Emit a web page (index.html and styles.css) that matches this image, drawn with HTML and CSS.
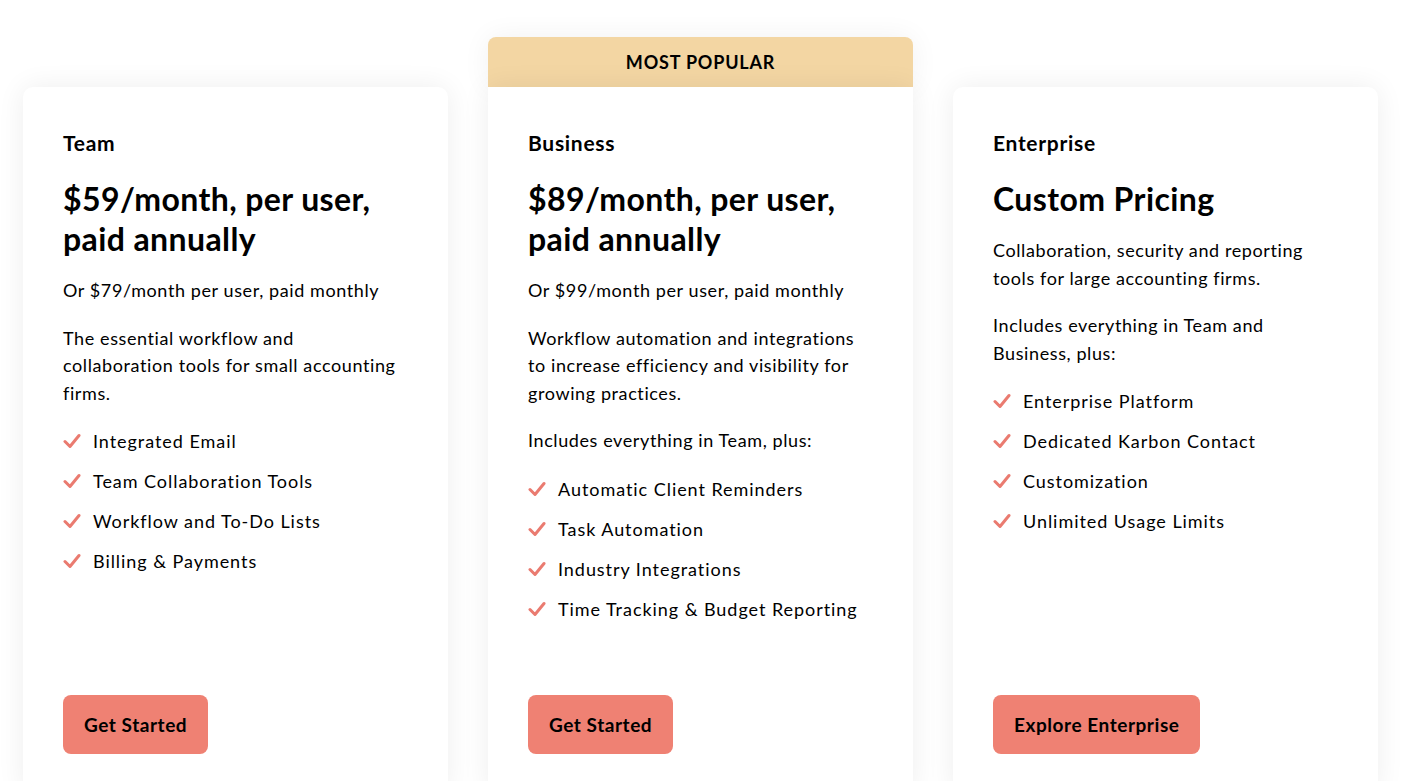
FILE: index.html
```html
<!DOCTYPE html>
<html lang="en">
<head>
<meta charset="utf-8">
<title>Pricing</title>
<link rel="stylesheet" href="styles.css">
</head>
<body>
<main class="plans">
  <section class="plan">
    <div class="card">
      <h3 class="plan-name">Team</h3>
      <h2 class="price">$59/month, per user, paid annually</h2>
      <p class="alt">Or $79/month per user, paid monthly</p>
      <p class="desc">The essential workflow and collaboration tools for small accounting firms.</p>
      <ul class="features">
        <li><svg class="check" viewBox="0 0 18 16"><polyline points="2,8.5 7,13.5 16,2.5"/></svg>Integrated Email</li>
        <li><svg class="check" viewBox="0 0 18 16"><polyline points="2,8.5 7,13.5 16,2.5"/></svg>Team Collaboration Tools</li>
        <li><svg class="check" viewBox="0 0 18 16"><polyline points="2,8.5 7,13.5 16,2.5"/></svg>Workflow and To-Do Lists</li>
        <li><svg class="check" viewBox="0 0 18 16"><polyline points="2,8.5 7,13.5 16,2.5"/></svg>Billing &amp; Payments</li>
      </ul>
      <a class="btn" href="#">Get Started</a>
    </div>
  </section>
  <section class="plan popular">
    <div class="banner">MOST POPULAR</div>
    <div class="card">
      <h3 class="plan-name">Business</h3>
      <h2 class="price">$89/month, per user, paid annually</h2>
      <p class="alt">Or $99/month per user, paid monthly</p>
      <p class="desc">Workflow automation and integrations to increase efficiency and visibility for growing practices.</p>
      <p class="desc">Includes everything in Team, plus:</p>
      <ul class="features">
        <li><svg class="check" viewBox="0 0 18 16"><polyline points="2,8.5 7,13.5 16,2.5"/></svg>Automatic Client Reminders</li>
        <li><svg class="check" viewBox="0 0 18 16"><polyline points="2,8.5 7,13.5 16,2.5"/></svg>Task Automation</li>
        <li><svg class="check" viewBox="0 0 18 16"><polyline points="2,8.5 7,13.5 16,2.5"/></svg>Industry Integrations</li>
        <li><svg class="check" viewBox="0 0 18 16"><polyline points="2,8.5 7,13.5 16,2.5"/></svg>Time Tracking &amp; Budget Reporting</li>
      </ul>
      <a class="btn" href="#">Get Started</a>
    </div>
  </section>
  <section class="plan">
    <div class="card">
      <h3 class="plan-name">Enterprise</h3>
      <h2 class="price">Custom Pricing</h2>
      <p class="desc">Collaboration, security and reporting tools for large accounting firms.</p>
      <p class="desc">Includes everything in Team and Business, plus:</p>
      <ul class="features">
        <li><svg class="check" viewBox="0 0 18 16"><polyline points="2,8.5 7,13.5 16,2.5"/></svg>Enterprise Platform</li>
        <li><svg class="check" viewBox="0 0 18 16"><polyline points="2,8.5 7,13.5 16,2.5"/></svg>Dedicated Karbon Contact</li>
        <li><svg class="check" viewBox="0 0 18 16"><polyline points="2,8.5 7,13.5 16,2.5"/></svg>Customization</li>
        <li><svg class="check" viewBox="0 0 18 16"><polyline points="2,8.5 7,13.5 16,2.5"/></svg>Unlimited Usage Limits</li>
      </ul>
      <a class="btn" href="#">Explore Enterprise</a>
    </div>
  </section>
</main>
</body>
</html>
```
FILE: styles.css
```css
* { box-sizing: border-box; }
html, body {
  margin: 0;
  padding: 0;
  background: #fff;
  overflow: hidden;
  height: 781px;
}
body {
  font-family: Lato, "Open Sans", Arial, sans-serif;
  color: #000;
}
.plans {
  display: flex;
  gap: 40px;
  padding: 37px 0 0 23px;
}
.plan {
  width: 425px;
  display: flex;
  flex-direction: column;
  padding-top: 50px;
}
.plan.popular { padding-top: 0; }
.banner {
  height: 50px;
  background: #f3d6a3;
  border-radius: 8px 8px 0 0;
  display: flex;
  align-items: center;
  justify-content: center;
  font-size: 18px;
  font-weight: 700;
  letter-spacing: 0.8px;
  box-shadow: 0 0 28px rgba(0,0,0,0.06);
}
.card {
  background: #fff;
  border-radius: 10px;
  box-shadow: 0 0 28px rgba(0,0,0,0.07);
  padding: 40px 40px 40px 40px;
  height: 707px;
  display: flex;
  flex-direction: column;
}
.popular .card { border-radius: 0 0 10px 10px; }
.plan-name {
  margin: 0;
  font-size: 21px;
  line-height: 32px;
  font-weight: 700;
  letter-spacing: 0.7px;
}
.price {
  margin: 20px 0 0;
  font-size: 32px;
  line-height: 40px;
  font-weight: 700;
  letter-spacing: 0.4px;
}
.alt, .desc {
  margin: 18px 0 0;
  font-size: 18px;
  line-height: 27.5px;
  letter-spacing: 0.6px;
}
.desc { margin-top: 20px; }
.price + .desc { margin-top: 18px; }
.features {
  list-style: none;
  margin: 20px 0 0;
  padding: 0;
  display: flex;
  flex-direction: column;
  gap: 12px;
}
.features li {
  display: flex;
  align-items: center;
  font-size: 18px;
  line-height: 28px;
  letter-spacing: 0.95px;
}
.check {
  width: 18px;
  height: 16px;
  margin-right: 12px;
  flex: none;
  fill: none;
  stroke: #ea7b70;
  stroke-width: 3;
  stroke-linecap: round;
  stroke-linejoin: round;
}
.btn {
  margin-top: auto;
  margin-bottom: 0;
  align-self: flex-start;
  display: inline-flex;
  align-items: center;
  height: 59px;
  padding: 0 21px;
  background: #ef8173;
  border-radius: 8px;
  color: #000;
  text-decoration: none;
  font-size: 19px;
  font-weight: 700;
  letter-spacing: 0.55px;
}
```
